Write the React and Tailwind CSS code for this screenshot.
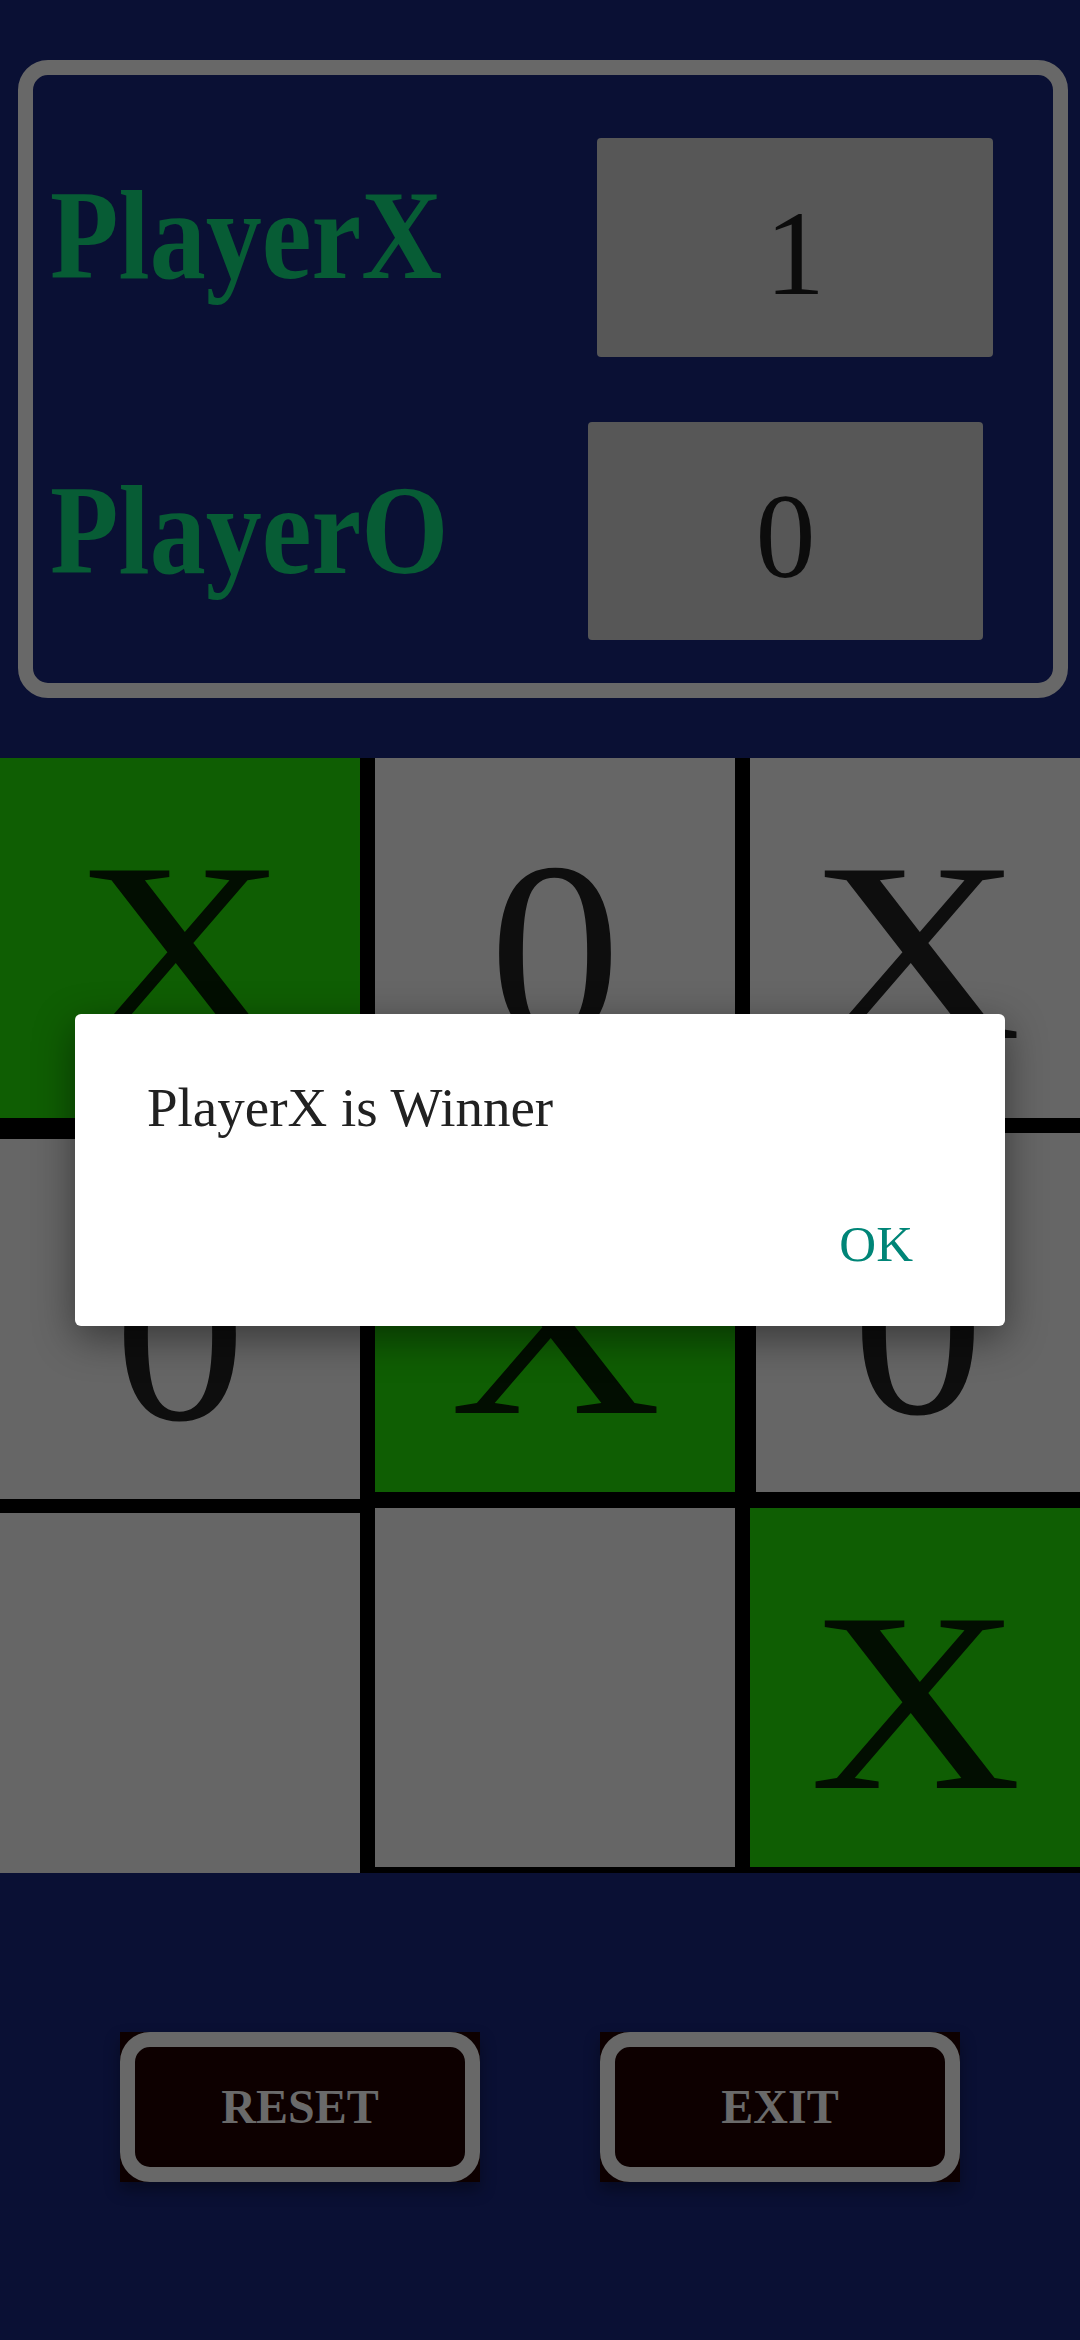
import React from "react";

const serif = { fontFamily: '"Liberation Serif", "Times New Roman", serif' };

function Cell({ value, win, className = "" }) {
  const bg = win ? "bg-[#0f5e03]" : "bg-[#666666]";
  const fg = win ? "text-[#020e01]" : "text-[#0e0e0e]";
  const stretch = value === "X" ? "scale-x-[1.15]" : "scale-x-[1.03]";
  return (
    <div className={`flex items-center justify-center ${bg} ${className}`}>
      <span className={`inline-block pt-[28px] text-[256px] leading-none ${stretch} ${fg}`}>
        {value}
      </span>
    </div>
  );
}

function ScoreRow({ name, score, labelWidth, boxWidth, boxHeight, labelClass }) {
  return (
    <div className="flex items-center">
      <div className={`${labelWidth} shrink-0 pl-[17px]`}>
        <span
          className={`inline-block origin-left scale-x-[0.89] text-[126px] font-bold leading-none text-[#075c35] ${labelClass}`}
        >
          {name}
        </span>
      </div>
      <div
        className={`flex ${boxWidth} ${boxHeight} items-center justify-center rounded-[4px] bg-[#575757]`}
      >
        <span className="pt-[12px] text-[120px] leading-none text-[#0c0c0c]">{score}</span>
      </div>
    </div>
  );
}

function GameButton({ label }) {
  return (
    <button
      type="button"
      className="h-[150px] w-[360px] bg-[#0d0000] shadow-[0_8px_14px_rgba(0,0,0,0.35)]"
    >
      <div className="flex h-full w-full items-center justify-center rounded-[30px] border-[15px] border-[#686868]">
        <span className="text-[48px] font-bold leading-none text-[#6a6a6a]">{label}</span>
      </div>
    </button>
  );
}

export default function App() {
  return (
    <div className="relative min-h-screen overflow-hidden bg-[#0a1034]" style={serif}>
      {/* score panel */}
      <section className="ml-[18px] mr-[12px] mt-[60px] h-[638px] rounded-[30px] border-[15px] border-[#686868] pt-[63px]">
        <ScoreRow
          name="PlayerX"
          score="1"
          labelWidth="w-[564px]"
          boxWidth="w-[396px]"
          boxHeight="h-[219px]"
          labelClass="mb-[24px]"
        />
        <div className="mt-[65px]">
          <ScoreRow
            name="PlayerO"
            score="0"
            labelWidth="w-[555px]"
            boxWidth="w-[395px]"
            boxHeight="h-[218px]"
            labelClass=""
          />
        </div>
      </section>

      {/* board */}
      <section className="mt-[60px] flex h-[1115px] bg-black">
        <div className="flex w-[360px] flex-col">
          <Cell value="X" win className="h-[360px]" />
          <Cell value="0" className="mt-[21px] h-[360px]" />
          <Cell value="" className="mt-[14px] h-[360px]" />
        </div>
        <div className="ml-[15px] flex w-[360px] flex-col">
          <Cell value="0" className="h-[360px]" />
          <Cell value="X" win className="mt-[15px] h-[359px]" />
          <Cell value="" className="mt-[16px] h-[359px]" />
        </div>
        <div className="ml-[15px] flex flex-1 flex-col">
          <Cell value="X" className="h-[360px]" />
          <Cell value="0" className="ml-[6px] mt-[15px] h-[359px]" />
          <Cell value="X" win className="mt-[16px] h-[359px]" />
        </div>
      </section>

      {/* controls */}
      <section className="mt-[159px] flex justify-evenly">
        <GameButton label="RESET" />
        <GameButton label="EXIT" />
      </section>

      {/* winner dialog */}
      <div className="absolute left-[75px] top-[1014px] flex w-[930px] flex-col rounded-[6px] bg-white pb-[56px] pl-[72px] pr-[92px] pt-[66px] shadow-[0_12px_40px_rgba(0,0,0,0.45)]">
        <p className="text-[55px] leading-none text-[#212121]">PlayerX is Winner</p>
        <div className="mt-[84px] flex justify-end">
          <button type="button" className="text-[51px] leading-none text-[#008577]">
            OK
          </button>
        </div>
      </div>
    </div>
  );
}
